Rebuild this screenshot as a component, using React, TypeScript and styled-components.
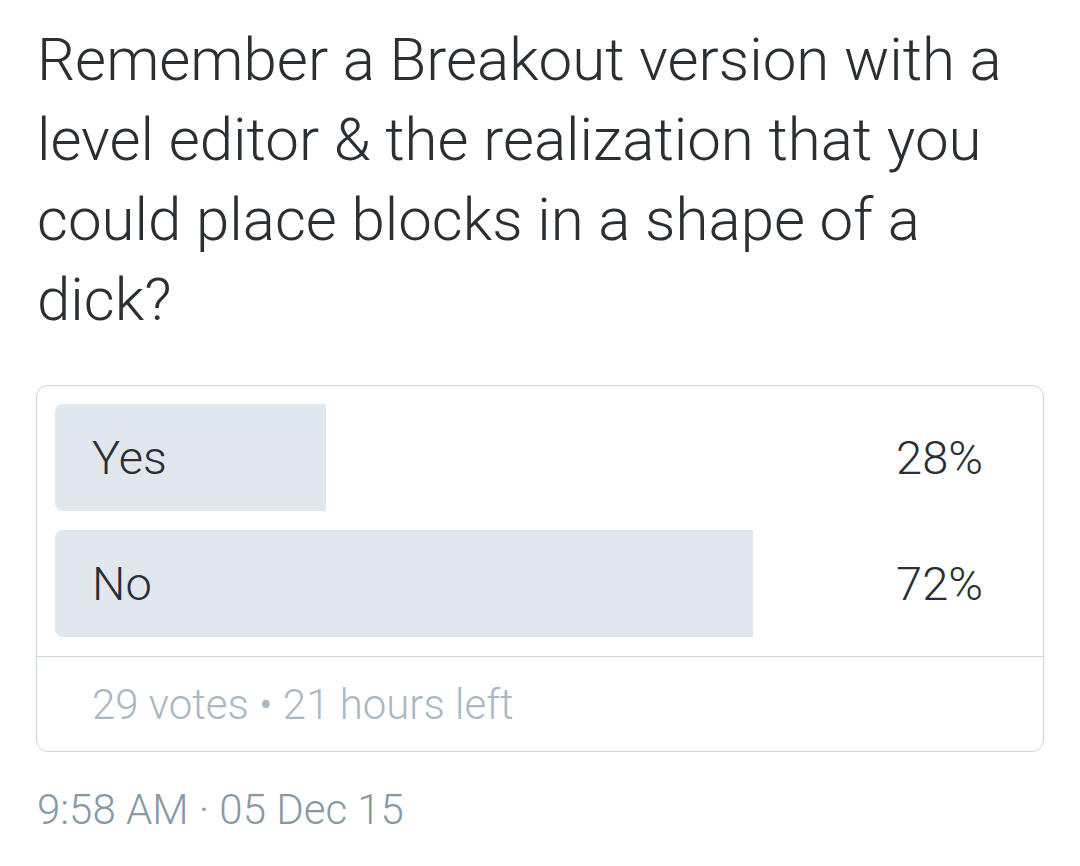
import React from "react";
import styled, { createGlobalStyle } from "styled-components";

const Global = createGlobalStyle`
  html, body { margin: 0; padding: 0; background: #ffffff; }
  body { font-family: Roboto, "Noto Sans", sans-serif; font-weight: 300; color: #292f33; }
`;

const Page = styled.div`
  padding: 20px 36px 0 36px;
  width: 1008px;
`;

const Title = styled.h1`
  margin: 0 0 45px 1px;
  font-size: 60px;
  line-height: 80px;
  font-weight: 300;
  color: #292f33;
`;

const Card = styled.div`
  border: 1px solid #ccd6dd;
  border-radius: 12px;
  overflow: hidden;
`;

const Options = styled.div`
  display: flex;
  flex-direction: column;
  gap: 19px;
  padding: 18px 19px 19px 18px;
  border-bottom: 1px solid #ccd6dd;
`;

const Option = styled.div`
  position: relative;
  height: 107px;
  display: flex;
  align-items: center;
  justify-content: space-between;
  padding: 0 41px 0 37px;
`;

const Fill = styled.div`
  position: absolute;
  left: 0;
  top: 0;
  bottom: 0;
  background: #e1e8ed;
  border-radius: 8px 0 0 8px;
  z-index: 0;
`;

const Label = styled.span`
  position: relative;
  z-index: 1;
  font-size: 47px;
  color: #292f33;
`;

const Footer = styled.div`
  height: 94px;
  display: flex;
  align-items: center;
  padding-left: 55px;
  font-size: 42px;
  color: #aab8c2;
`;

const Stamp = styled.div`
  margin: 33px 0 0 1px;
  font-size: 42px;
  color: #8899a6;
`;

const options = [
  { label: "Yes", pct: 28 },
  { label: "No", pct: 72 },
];

export default function App() {
  return (
    <>
      <Global />
      <Page>
        <Title>
          Remember a Breakout version with a level editor &amp; the realization that you could place blocks in a shape of a dick?
        </Title>
        <Card>
          <Options>
            {options.map((o) => (
              <Option key={o.label}>
                <Fill style={{ width: `${o.pct}%` }} />
                <Label>{o.label}</Label>
                <Label>{o.pct}%</Label>
              </Option>
            ))}
          </Options>
          <Footer>29 votes • 21 hours left</Footer>
        </Card>
        <Stamp>9:58 AM · 05 Dec 15</Stamp>
      </Page>
    </>
  );
}
